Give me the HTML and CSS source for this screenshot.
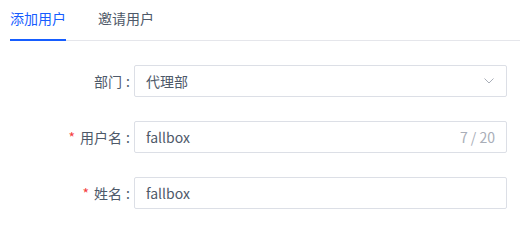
FILE: index.html
```html
<!DOCTYPE html>
<html lang="zh">
<head>
<meta charset="utf-8">
<link rel="stylesheet" href="styles.css">
</head>
<body>
<div class="page">
  <div class="tabs">
    <div class="tab active">添加用户</div>
    <div class="tab">邀请用户</div>
  </div>
  <form class="form">
    <div class="row">
      <label class="label">部门<span class="colon">:</span></label>
      <div class="control select">
        <span class="value">代理部</span>
        <svg class="arrow" width="12" height="12" viewBox="0 0 12 12"><path d="M1.5 3.5 L6 8 L10.5 3.5" fill="none" stroke="#a9aeb8" stroke-width="1"/></svg>
      </div>
    </div>
    <div class="row">
      <label class="label"><span class="req">*</span>用户名<span class="colon">:</span></label>
      <div class="control">
        <span class="value">fallbox</span>
        <span class="count">7 / 20</span>
      </div>
    </div>
    <div class="row">
      <label class="label"><span class="req">*</span>姓名<span class="colon">:</span></label>
      <div class="control">
        <span class="value">fallbox</span>
      </div>
    </div>
  </form>
</div>
</body>
</html>
```

FILE: styles.css
```css
html, body {
  margin: 0;
  padding: 0;
  background: #ffffff;
}
body {
  font-family: "Noto Sans CJK SC", "Noto Sans", sans-serif;
  font-size: 14px;
  color: #1d2129;
}
.page {
  padding-left: 10px;
}
.tabs {
  display: flex;
  gap: 32px;
  height: 41px;
  border-bottom: 1px solid #e5e6eb;
  box-sizing: border-box;
}
.tab {
  height: 40px;
  box-sizing: border-box;
  padding-top: 7px;
  line-height: 22px;
  color: #4e5969;
  position: relative;
}
.tab.active {
  color: #165dff;
}
.tab.active::after {
  content: "";
  position: absolute;
  left: 0;
  right: 0;
  bottom: -1px;
  height: 2px;
  background: #165dff;
}
.form {
  display: flex;
  flex-direction: column;
  gap: 24px;
  padding-top: 24px;
  padding-right: 13px;
}
.row {
  display: flex;
  align-items: center;
}
.label {
  width: 120px;
  padding-right: 4px;
  text-align: right;
  color: #4e5969;
  line-height: 22px;
}
.colon {
  margin-left: 4px;
}
.req {
  color: #f53f3f;
  margin-right: 5px;
}
.control {
  flex: 1;
  height: 32px;
  box-sizing: border-box;
  border: 1px solid #dcdfe6;
  border-radius: 2px;
  display: flex;
  align-items: center;
  padding: 0 11px;
  color: #4e5969;
}
.value {
  flex: 1;
}
.count {
  color: #a9aeb8;
}
.arrow {
  display: block;
}
```
